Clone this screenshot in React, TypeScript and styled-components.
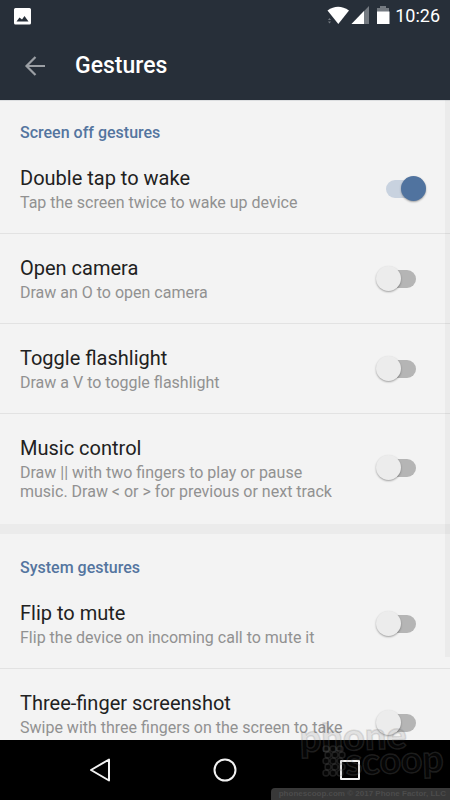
import React from "react";
import styled, { createGlobalStyle } from "styled-components";

const GlobalStyle = createGlobalStyle`
  *, *::before, *::after { box-sizing: border-box; }
  body {
    margin: 0;
    background: #000;
    font-family: Roboto, "Liberation Sans", sans-serif;
  }
`;

const Screen = styled.div`
  position: relative;
  display: flex;
  flex-direction: column;
  height: 100vh;
  overflow: hidden;
  background: #f3f3f3;
`;

const Header = styled.header`
  flex: none;
  background: #272f39;
  color: #fff;
`;

const StatusBar = styled.div`
  display: flex;
  align-items: center;
  justify-content: space-between;
  height: 32px;
  padding: 0 10px 0 14px;
`;

const StatusIcons = styled.div`
  display: flex;
  align-items: center;
`;

const Clock = styled.time`
  margin-left: 5px;
  font-size: 18px;
  line-height: 24px;
`;

const AppBar = styled.div`
  display: flex;
  align-items: center;
  gap: 27px;
  height: 68px;
  padding: 0 22px;
`;

const Title = styled.h1`
  margin: 0;
  font-size: 23px;
  line-height: 28px;
  font-weight: 500;
`;

const IconButton = styled.button`
  display: grid;
  place-items: center;
  padding: 0;
  border: 0;
  background: none;
  color: inherit;
`;

const Content = styled.main`
  position: relative;
  flex: 1;
  min-height: 0;
  overflow: hidden;
  box-shadow: inset 0 1px #dcdee0;
`;

const ScrollThumb = styled.div`
  position: absolute;
  top: 0;
  right: 0;
  width: 5px;
  height: 87%;
  background: rgba(0, 0, 0, 0.03);
`;

const Section = styled.section`
  padding-bottom: 2px;

  & + & {
    padding-top: 1px;
    border-top: 10px solid #ebebeb;
  }
`;

const SectionTitle = styled.h2`
  margin: 0;
  padding: 22px 20px 0;
  color: #54759f;
  font-size: 16px;
  line-height: 21px;
  font-weight: 500;
`;

const Row = styled.label`
  display: flex;
  align-items: center;
  justify-content: space-between;
  gap: 28px;
  padding: 22px 24px 21px 20px;

  & + & {
    box-shadow: inset 0 1px #e2e2e2;
  }
`;

const Texts = styled.span`
  display: flex;
  flex: 1;
  flex-direction: column;
  gap: 2px;
`;

const Name = styled.span`
  color: #212121;
  font-size: 20px;
  line-height: 26px;
`;

const Description = styled.span<{ $lines: number }>`
  min-height: ${(p) => p.$lines * 19}px;
  color: #919191;
  font-size: 16px;
  line-height: 19px;
`;

const Switch = styled.input`
  appearance: none;
  position: relative;
  flex: none;
  width: 50px;
  height: 26px;
  margin: 0;

  &::before {
    content: "";
    position: absolute;
    inset: 4px 10px;
    border-radius: 9px;
    background: #b5b5b5;
  }
  &::after {
    content: "";
    position: absolute;
    top: 0;
    left: 0;
    width: 25px;
    height: 25px;
    border-radius: 50%;
    background: #ececec;
    box-shadow: 0 1px 2px rgba(0, 0, 0, 0.35);
  }
  &:checked::before {
    background: #c8d2df;
  }
  &:checked::after {
    left: auto;
    right: 0;
    background: #50739f;
  }
`;

const NavBar = styled.nav`
  display: grid;
  flex: none;
  grid-template-columns: repeat(3, 125px);
  justify-content: center;
  height: 60px;
  background: #000;
  color: #f2f2f2;
`;

const Watermark = styled.div`
  position: absolute;
  right: 0;
  bottom: 0;
  display: flex;
  flex-direction: column;
  align-items: flex-end;
  pointer-events: none;
`;

const Copyright = styled.small`
  padding: 0 4px 0 8px;
  border-top-left-radius: 4px;
  background: #383838;
  color: #4c4c4c;
  font: bold 8px/12px "Liberation Sans", sans-serif;
  white-space: nowrap;
`;

type Gesture = { name: string; text: string; on?: boolean; lines?: number };

const sections: { title: string; items: Gesture[] }[] = [
  {
    title: "Screen off gestures",
    items: [
      { name: "Double tap to wake", text: "Tap the screen twice to wake up device", on: true },
      { name: "Open camera", text: "Draw an O to open camera" },
      { name: "Toggle flashlight", text: "Draw a V to toggle flashlight" },
      {
        name: "Music control",
        text: "Draw || with two fingers to play or pause music. Draw < or > for previous or next track",
        lines: 2,
      },
    ],
  },
  {
    title: "System gestures",
    items: [
      { name: "Flip to mute", text: "Flip the device on incoming call to mute it" },
      { name: "Three-finger screenshot", text: "Swipe with three fingers on the screen to take", lines: 2 },
    ],
  },
];

const PictureIcon = () => (
  <svg width="17" height="17" viewBox="0 0 17 17" aria-hidden="true">
    <path
      fill="#fff"
      fillRule="evenodd"
      d="M1.5 0h14Q17 0 17 1.500v13.500Q17 16.500 15.500 16.500h-14Q0 16.500 0 15V1.500Q0 0 1.500 0ZM2.500 13.500h12L10.500 8 8 11.500 5.500 9.500Z"
    />
  </svg>
);

const SignalIcons = () => (
  <svg width="63" height="20" viewBox="0 0 63 20" aria-hidden="true">
    <path d="M.5 4.500Q11 -3 22 4.500L11.300 18Z" fill="#fff" />
    <path d="m1 14 1.500-2L4 14ZM1 15.500 2.500 17.500 4 15.500Z" fill="#747a81" />
    <path d="M42 0v18H24.500Z" fill="#747a81" />
    <path d="M37 5v13H24.500Z" fill="#fff" />
    <path d="M50 2h3V0h6v2h3v4H50Z" fill="#747a81" />
    <path d="M50 5.500h12.500V18H50Z" fill="#fff" />
  </svg>
);

const cells = Array.from({ length: 15 }, (_, i) => ({
  x: 27 + (i % 3) * 7 + (Math.floor(i / 3) % 2 ? 2 : 0),
  y: 37 + Math.floor(i / 3) * 6,
}));

const Logo = () => (
  <svg width="151" height="76" viewBox="0 0 151 76" aria-hidden="true">
    <g
      fill="rgba(60,60,60,.1)"
      stroke="rgba(125,125,125,.22)"
      strokeWidth="1.500"
      fontFamily="Lato, sans-serif"
      fontWeight="900"
    >
      <text x="1" y="40" fontSize="38" transform="rotate(-2 1 40)">phone</text>
      <text x="47" y="63" fontSize="37" transform="rotate(-2 47 63)">scoop</text>
      {cells.map((c) => (
        <circle key={`${c.x}-${c.y}`} cx={c.x} cy={c.y} r="3" />
      ))}
    </g>
  </svg>
);

export default function App() {
  return (
    <Screen>
      <GlobalStyle />
      <Header>
        <StatusBar>
          <PictureIcon />
          <StatusIcons>
            <SignalIcons />
            <Clock>10:26</Clock>
          </StatusIcons>
        </StatusBar>
        <AppBar>
          <IconButton aria-label="Back">
            <svg width="26" height="26" viewBox="0 0 26 26" fill="none" stroke="#9b9fa4" strokeWidth="2.200">
              <path d="M23 13H5M13.500 4 4.500 13l9 9" />
            </svg>
          </IconButton>
          <Title>Gestures</Title>
        </AppBar>
      </Header>
      <Content>
        {sections.map((section) => (
          <Section key={section.title}>
            <SectionTitle>{section.title}</SectionTitle>
            {section.items.map((item) => (
              <Row key={item.name}>
                <Texts>
                  <Name>{item.name}</Name>
                  <Description $lines={item.lines ?? 1}>{item.text}</Description>
                </Texts>
                <Switch type="checkbox" role="switch" defaultChecked={item.on} />
              </Row>
            ))}
          </Section>
        ))}
        <ScrollThumb />
      </Content>
      <NavBar>
        <IconButton aria-label="Back">
          <svg width="26" height="26" viewBox="0 0 26 26" fill="none" stroke="currentColor" strokeWidth="2" strokeLinejoin="round">
            <path d="M22 2.500v21L4 13Z" />
          </svg>
        </IconButton>
        <IconButton aria-label="Home">
          <svg width="26" height="26" viewBox="0 0 26 26" fill="none" stroke="currentColor" strokeWidth="2">
            <circle cx="13" cy="13" r="10.500" />
          </svg>
        </IconButton>
        <IconButton aria-label="Overview">
          <svg width="26" height="26" viewBox="0 0 26 26" fill="none" stroke="currentColor" strokeWidth="2" strokeLinejoin="round">
            <path d="M4 4h18v18H4Z" />
          </svg>
        </IconButton>
      </NavBar>
      <Watermark>
        <Logo />
        <Copyright>phonescoop.com © 2017 Phone Factor, LLC</Copyright>
      </Watermark>
    </Screen>
  );
}
